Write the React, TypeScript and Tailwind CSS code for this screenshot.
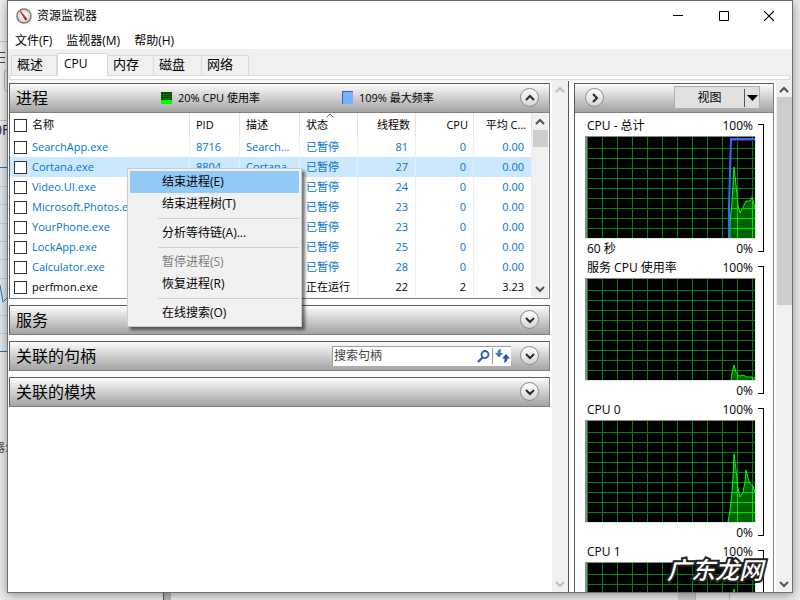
import React from "react";

type Point = [number, number];

const processes = [
  { name: "SearchApp.exe", pid: "8716", desc: "Search…", state: "已暂停", threads: 81, cpu: 0, avg: "0.00" },
  { name: "Cortana.exe", pid: "8804", desc: "Cortana", state: "已暂停", threads: 27, cpu: 0, avg: "0.00", selected: true },
  { name: "Video.UI.exe", pid: "", desc: "", state: "已暂停", threads: 24, cpu: 0, avg: "0.00" },
  { name: "Microsoft.Photos.e", pid: "", desc: "", state: "已暂停", threads: 23, cpu: 0, avg: "0.00" },
  { name: "YourPhone.exe", pid: "", desc: "", state: "已暂停", threads: 23, cpu: 0, avg: "0.00" },
  { name: "LockApp.exe", pid: "", desc: "", state: "已暂停", threads: 25, cpu: 0, avg: "0.00" },
  { name: "Calculator.exe", pid: "", desc: "", state: "已暂停", threads: 28, cpu: 0, avg: "0.00" },
  { name: "perfmon.exe", pid: "", desc: "", state: "正在运行", threads: 22, cpu: 2, avg: "3.23", running: true },
];

const graphs: { id: string; title: string; low: string; data: Point[]; frequency?: boolean }[] = [
  {
    id: "total",
    title: "CPU - 总计",
    low: "60 秒",
    frequency: true,
    data: [[145, 102], [145, 87], [147, 66], [149, 31], [151, 49], [153, 69], [155, 77], [158, 71], [161, 65], [165, 65], [167, 61], [170, 72]],
  },
  {
    id: "service",
    title: "服务 CPU 使用率",
    low: "",
    data: [[146, 102], [147, 95], [149, 87], [151, 94], [153, 97], [155, 98], [158, 97], [162, 99], [167, 99], [168, 101], [170, 99]],
  },
  {
    id: "cpu0",
    title: "CPU 0",
    low: "",
    data: [[143, 102], [145, 90], [147, 72], [148, 58], [149, 34], [151, 50], [153, 68], [155, 77], [158, 72], [160, 62], [161, 50], [163, 58], [165, 64], [168, 66], [170, 72]],
  },
  {
    id: "cpu1",
    title: "CPU 1",
    low: "",
    data: [[144, 102], [147, 60], [149, 27], [152, 60], [155, 80], [160, 70], [165, 66], [170, 72]],
  },
];

function Chevron({ dir, className }: { dir: "up" | "down" | "right"; className?: string }) {
  const d = { up: "M1 7 L5 3 L9 7", down: "M1 3 L5 7 L9 3", right: "M3 1 L7 5 L3 9" }[dir];
  return (
    <svg viewBox="0 0 10 10" width="10" height="10" className={className} fill="none" stroke="currentColor" strokeWidth="2" aria-hidden="true">
      <path d={d} />
    </svg>
  );
}

function RoundButton({ dir, label }: { dir: "up" | "down" | "right"; label: string }) {
  return (
    <button
      aria-label={label}
      className="flex size-[19px] shrink-0 items-center justify-center rounded-full border border-[#8c8c8c] bg-linear-to-b from-white to-[#d4d4d4] text-[#2a2a2a]"
    >
      <Chevron dir={dir} />
    </button>
  );
}

function ScrollBar({ disabled, children }: { disabled?: boolean; children?: React.ReactNode }) {
  const tone = disabled ? "text-[#bfbfbf]" : "text-[#505050]";
  return (
    <div className="flex w-4 shrink-0 flex-col items-center justify-between bg-[#f0f0f0]">
      <div className="flex w-full flex-col items-center">
        <span className="flex h-4 items-center pt-[2px]">
          <Chevron dir="up" className={tone} />
        </span>
        {children}
      </div>
      <span className="flex h-4 items-center">
        <Chevron dir="down" className={tone} />
      </span>
    </div>
  );
}

function SectionHeader({ title, open, children }: { title: string; open?: boolean; children?: React.ReactNode }) {
  return (
    <header className="flex h-[29px] items-center border-b border-[#808080] bg-linear-to-b from-[#fdfdfd] to-[#a3a3a3] pr-[10px] pb-px pl-[6px]">
      <h2 className="w-[144px] text-[16px] leading-5">{title}</h2>
      <div className="flex flex-1 items-center">{children}</div>
      <RoundButton dir={open ? "up" : "down"} label={title} />
    </header>
  );
}

function Check({ label }: { label: string }) {
  return (
    <input
      type="checkbox"
      aria-label={label}
      className="size-[13px] shrink-0 appearance-none border border-[#333] bg-white checked:bg-[#0078d7]"
    />
  );
}

function ProcessTable() {
  const th = "relative border-r border-[#e2e2e2] font-normal whitespace-nowrap overflow-hidden";
  const td = "border-r border-[#e4f0fb] whitespace-nowrap overflow-hidden";
  return (
    <div className="flex bg-white pr-px pb-px">
      <table className="min-w-0 flex-1 table-fixed border-separate border-spacing-0 text-[11px] leading-[20px]">
        <colgroup>
          <col />
          <col className="w-[50px]" />
          <col className="w-[60px]" />
          <col className="w-[58px]" />
          <col className="w-[58px]" />
          <col className="w-[58px]" />
          <col className="w-[58px]" />
        </colgroup>
        <thead>
          <tr className="h-6">
            <th className={`${th} text-left`}>
              <label className="flex items-center gap-[5px] pl-1">
                <Check label="全选" />
                名称
              </label>
            </th>
            <th className={`${th} pl-[6px] text-left`}>PID</th>
            <th className={`${th} pl-[6px] text-left`}>描述</th>
            <th className={`${th} pl-[6px] text-left`}>
              <svg className="absolute top-0 left-[26px]" width="8" height="5" viewBox="0 0 8 5" fill="none" stroke="#666" aria-hidden="true">
                <path d="M0.5 4.5 L4 1 L7.5 4.5" />
              </svg>
              状态
            </th>
            <th className={`${th} pr-[5px] text-right`}>线程数</th>
            <th className={`${th} pr-[5px] text-right`}>CPU</th>
            <th className={`${th} pr-[5px] text-right`}>平均 C…</th>
          </tr>
        </thead>
        <tbody>
          {processes.map((p) => (
            <tr key={p.name} className={`h-5 ${p.selected ? "bg-[#cce8ff]" : ""} ${p.running ? "text-black" : "text-[#0074d1]"}`}>
              <td className={td}>
                <label className="flex items-center gap-[5px] pl-1">
                  <Check label={p.name} />
                  {p.name}
                </label>
              </td>
              <td className={`${td} pl-[6px]`}>{p.pid}</td>
              <td className={`${td} pl-[6px]`}>{p.desc}</td>
              <td className={`${td} pl-[6px]`}>{p.state}</td>
              <td className={`${td} pr-[7px] text-right`}>{p.threads}</td>
              <td className={`${td} pr-[7px] text-right`}>{p.cpu}</td>
              <td className={`${td} pr-[7px] text-right`}>{p.avg}</td>
            </tr>
          ))}
        </tbody>
      </table>
      <ScrollBar>
        <div className="mt-px h-[17px] w-[15px] bg-[#cdcdcd]" />
      </ScrollBar>
    </div>
  );
}

function SearchHandles() {
  return (
    <div className="mr-[9px] ml-auto flex h-5 items-center border-t border-l border-[#a0a0a0] bg-white">
      <input aria-label="搜索句柄" placeholder="搜索句柄" className="w-[141px] pl-px text-[12px] leading-4 outline-none placeholder:text-[#444]" />
      <button aria-label="搜索" className="flex w-[18px] justify-center">
        <svg width="13" height="13" viewBox="0 0 13 13" fill="none" stroke="#2c5fb0" aria-hidden="true">
          <circle cx="8" cy="4.500" r="3.500" strokeWidth="1.800" />
          <path d="M5.500 7.500 L1 12" strokeWidth="2.400" />
        </svg>
      </button>
      <button aria-label="刷新" className="flex h-4 w-[19px] items-center justify-center border-l border-[#999]">
        <svg width="15" height="14" viewBox="0 0 15 14" aria-hidden="true">
          <path d="M6.500 0 C4 0 2.500 1.500 2.500 4 L0 4 L4 8.500 L8 4 L5.500 4 C5.500 2 5.500 1 6.500 0 Z" fill="#3579c4" />
          <path d="M8.500 13.500 C11 13.500 12.500 12 12.500 9.500 L15 9.500 L11 5 L7 9.500 L9.500 9.500 C9.500 11.500 9.500 12.500 8.500 13.500 Z" fill="#1f56a5" />
        </svg>
      </button>
    </div>
  );
}

const columns = Array.from({ length: 12 }, (_, i) => 2 + i * 15);
const rows = Array.from({ length: 9 }, (_, i) => 12 + i * 10);

function GridLines({ color }: { color: string }) {
  return (
    <g fill={color}>
      {columns.map((x) => (
        <rect key={x} x={x} y="1" width="1" height="101" />
      ))}
      {rows.map((y) => (
        <rect key={y} x="2" y={y} width="168" height="1" />
      ))}
    </g>
  );
}

function Graph({ id, title, low, data, frequency }: (typeof graphs)[number]) {
  const line = data.map((p) => p.join(",")).join(" ");
  const area = `${data[0][0]},102 ${line} 170,102`;
  return (
    <figure className="flex gap-[2px]">
      <div className="w-[171px]">
        <figcaption className="flex h-[19px] items-center justify-between pr-[3px] pb-px pl-[2px]">
          <span>{title}</span>
          <span>100%</span>
        </figcaption>
        <svg width="171" height="103" viewBox="0 0 171 103" className="block" role="img" aria-label={title}>
          <rect width="171" height="103" fill="#e3e3e3" />
          <rect width="170" height="102" fill="#8c8c8c" />
          <rect x="2" y="1" width="168" height="101" fill="#000" />
          <GridLines color="#008016" />
          <clipPath id={`${id}-area`}>
            <polygon points={area} />
          </clipPath>
          <g clipPath={`url(#${id}-area)`}>
            <rect width="170" height="102" fill="#006200" />
            <GridLines color="#00e000" />
          </g>
          <polyline points={line} fill="none" stroke="#00ff00" />
          {frequency && (
            <>
              <path d="M146 4.500 H170" stroke="#5a1060" />
              <path d="M144 102 V70 L145 36 L146 3 H170" fill="none" stroke="#2f6bff" strokeWidth="2" />
            </>
          )}
        </svg>
        <div className="flex h-5 items-center justify-between pr-[3px] pb-px pl-[2px]">
          <span>{low}</span>
          <span>0%</span>
        </div>
      </div>
      <div className="my-[7px] w-[6px] border-y border-r border-black" />
    </figure>
  );
}

function ContextMenu() {
  const item = "block h-[22px] w-full pl-8 text-left leading-[22px]";
  const rule = "my-[3px] ml-7 border-t border-[#d0d0d0]";
  return (
    <div role="menu" className="absolute top-[167px] left-[119px] w-[175px] border border-[#ccc] bg-[#f1f1f1] p-[2px] text-[12px] shadow-[3px_3px_3px_rgba(0,0,0,0.55)]">
      <button role="menuitem" className={`${item} bg-[#91c9f7]`}>结束进程(E)</button>
      <button role="menuitem" className={item}>结束进程树(T)</button>
      <hr className={rule} />
      <button role="menuitem" className={item}>分析等待链(A)...</button>
      <hr className={rule} />
      <button role="menuitem" disabled className={`${item} text-[#7a7a7a]`}>暂停进程(S)</button>
      <button role="menuitem" className={item}>恢复进程(R)</button>
      <hr className={rule} />
      <button role="menuitem" className={item}>在线搜索(O)</button>
    </div>
  );
}

/* The slices of the windows behind that show around the edges. */
function Backdrop() {
  return (
    <div aria-hidden="true" className="absolute inset-0 overflow-hidden bg-[#ececec]">
      <svg className="absolute top-0 left-0" width="8" height="600" viewBox="0 0 8 600">
        <rect width="8" height="120" fill="#f0f0f0" />
        <rect y="167" width="8" height="185" fill="#e2e8ed" />
        <path d="M0 41.500 H8 M0 120.500 H8" stroke="#c4c4c4" />
        <path d="M0 52.500 H5 M0 57.500 H5 M0 62.500 H5" stroke="#444" />
        <path d="M8 70.500 H6 Q4.500 70.500 4.500 73 V89 Q4.500 91.500 8 91.500" stroke="#b8b8b8" fill="none" />
        <path d="M0 186.500 H8 M0 204.500 H8 M0 223.500 H8 M0 241.500 H8 M0 259.500 H8 M0 278.500 H8 M0 315.500 H8 M0 333.500 H8" stroke="#bed0df" />
        <path d="M0 167.500 H8 M0 351.500 H8" stroke="#1d76b0" />
        <path d="M0 285 L3 302 L7 298" stroke="#1d76b0" fill="none" />
      </svg>
      <span className="absolute top-[122px] -left-[6px] text-[14px] text-[#10205a]">0F</span>
      <span className="absolute top-[440px] -left-[7px] text-[12px] text-[#555]">器:</span>
      <div className="absolute bottom-0 left-[163px] h-2 w-2 border-l border-[#555] bg-[#b8b8b8]" />
      <div className="absolute bottom-0 left-[678px] h-2 w-[18px] border-r border-[#bbb] bg-[#cfcfcf]" />
      <div className="absolute bottom-0 left-[729px] h-2 border-l border-[#bbb]" />
    </div>
  );
}

const tabs = [
  { label: "概述", width: "w-[46px]" },
  { label: "CPU", width: "w-[51px]", active: true },
  { label: "内存", width: "w-[46px]" },
  { label: "磁盘", width: "w-[48px]" },
  { label: "网络", width: "w-[47px]" },
];

export default function App() {
  return (
    <div className="relative h-screen overflow-hidden px-[7px] pb-[7px] font-['Open_Sans','Noto_Sans_CJK_SC',sans-serif] text-[12px] leading-4 text-black">
      <Backdrop />
      <main className="relative flex h-full flex-col border border-[#6d6d6d] bg-[#f0f0f0] shadow-[0_2px_10px_rgba(0,0,0,0.4)]">
        <div className="flex h-[30px] shrink-0 items-center bg-white pl-2">
          <svg width="16" height="16" viewBox="0 0 16 16" aria-hidden="true">
            <circle cx="8" cy="8" r="7" fill="#f6f3ee" stroke="#777" strokeWidth="1.500" />
            <circle cx="8" cy="8" r="5" fill="none" stroke="#c9c4bc" />
            <path d="M4.500 3.500 L11 11 L9.500 12 Z" fill="#d01818" stroke="#d01818" />
          </svg>
          <h1 className="ml-[5px] flex-1">资源监视器</h1>
          <button aria-label="最小化" className="flex w-[46px] justify-center">
            <svg width="10" height="10" viewBox="0 0 10 10"><path d="M0 4.500 H10" stroke="#000" /></svg>
          </button>
          <button aria-label="最大化" className="flex w-[45px] justify-center">
            <svg width="10" height="10" viewBox="0 0 10 10"><path d="M0.500 0.500 H9.500 V9.500 H0.500 Z" stroke="#000" fill="none" /></svg>
          </button>
          <button aria-label="关闭" className="flex w-[46px] justify-center">
            <svg width="10" height="10" viewBox="0 0 10 10"><path d="M0 0 L10 10 M10 0 L0 10" stroke="#000" strokeWidth="1.200" /></svg>
          </button>
        </div>
        <nav className="flex h-[18px] shrink-0 items-end gap-[14px] bg-white pl-[7px]">
          <button>文件(F)</button>
          <button>监视器(M)</button>
          <button>帮助(H)</button>
        </nav>
        <div role="tablist" className="z-10 -mb-px flex h-[27px] shrink-0 items-end pl-[3px] text-[13px]">
          {tabs.map((t) => (
            <button
              key={t.label}
              role="tab"
              aria-selected={!!t.active}
              className={`${t.width} pl-[5px] text-left ${
                t.active
                  ? "h-[23px] border-x border-t border-[#d9d9d9] bg-white pb-[3px] pl-[6px] text-[12px]"
                  : "mb-px h-5 border-t border-r border-[#d9d9d9] pb-[3px] first:border-l"
              }`}
            >
              {t.label}
            </button>
          ))}
        </div>
        <div className="mr-[2px] ml-px h-[5px] shrink-0 border border-[#d9d9d9] bg-white" />

        <div className="mt-px flex min-h-0 flex-1 bg-white">
          <div className="flex min-w-0 flex-1 flex-col gap-[6px] pt-[2px] pr-[2px] pl-px">
            <section className="border border-t-[#5a5a5a] border-r-[#808080] border-b-[#808080] border-l-[#5a5a5a]">
              <SectionHeader title="进程" open>
                <div className="flex w-[182px] items-center gap-[6px] pl-px text-[11px]">
                  <svg width="11" height="12" viewBox="0 0 11 12" aria-hidden="true">
                    <rect width="11" height="12" fill="#063c06" />
                    <path d="M0 2.500 H11 M0 4.500 H11 M0 6.500 H11 M2.500 0 V8 M5.500 0 V8 M8.500 0 V8" stroke="#0a8a1a" strokeWidth="0.600" />
                    <rect y="8" width="11" height="4" fill="#00ff00" />
                  </svg>
                  20% CPU 使用率
                </div>
                <div className="flex items-center gap-[6px] text-[11px]">
                  <span className="h-[13px] w-[11px] border-t border-l border-[#3a5fc8] bg-[#74b4ff]" />
                  109% 最大频率
                </div>
              </SectionHeader>
              <ProcessTable />
            </section>
            <section className="border border-b-0 border-t-[#5a5a5a] border-r-[#808080] border-l-[#5a5a5a]">
              <SectionHeader title="服务" />
            </section>
            <section className="border border-b-0 border-t-[#5a5a5a] border-r-[#808080] border-l-[#5a5a5a]">
              <SectionHeader title="关联的句柄">
                <SearchHandles />
              </SectionHeader>
            </section>
            <section className="border border-b-0 border-t-[#5a5a5a] border-r-[#808080] border-l-[#5a5a5a]">
              <SectionHeader title="关联的模块" />
            </section>
          </div>
          <ScrollBar disabled />

          <aside className="flex w-56 shrink-0 border-l border-[#5a5a5a] pl-[5px]">
            <div className="mt-[2px] flex min-w-0 flex-1 flex-col overflow-hidden border-x border-t border-[#5a5a5a] border-r-[#808080]">
              <header className="flex h-[29px] shrink-0 items-center justify-between border-b border-[#808080] bg-linear-to-b from-[#fdfdfd] to-[#a3a3a3] pr-[13px] pb-px pl-[10px]">
                <RoundButton dir="right" label="展开" />
                <button className="flex h-[23px] w-[86px] items-center border border-[#adadad] bg-[#e1e1e1]">
                  <span className="flex-1 text-center">视图</span>
                  <span className="flex h-[18px] w-[15px] items-center justify-center border-l border-[#555]">
                    <svg width="11" height="6" viewBox="0 0 11 6" aria-hidden="true"><path d="M0 0 H11 L5.500 6 Z" /></svg>
                  </span>
                </button>
              </header>
              <div className="min-h-0 flex-1 overflow-hidden pt-[4px] pl-[10px]">
                {graphs.map((g) => (
                  <Graph key={g.id} {...g} />
                ))}
              </div>
            </div>
            <div className="ml-[2px] flex">
              <ScrollBar>
                <div className="h-[208px] w-[15px] bg-[#cdcdcd]" />
              </ScrollBar>
            </div>
          </aside>
        </div>
        <ContextMenu />
      </main>
      <span className="absolute right-[37px] bottom-[14px] text-[24px] leading-8 font-medium text-white italic [-webkit-text-stroke:4px_#222] [paint-order:stroke_fill]">
        广东龙网
      </span>
    </div>
  );
}
